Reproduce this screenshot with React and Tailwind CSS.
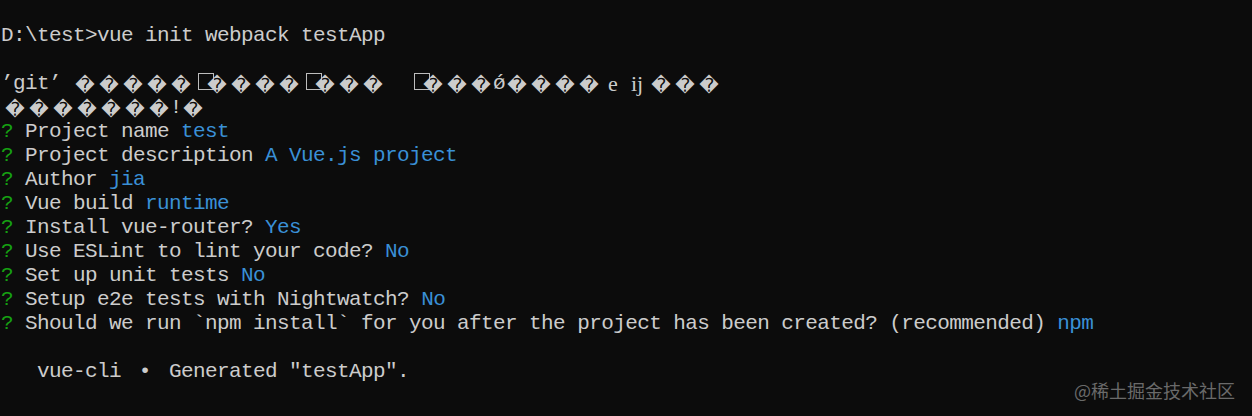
import React from 'react'

const FFFD = '\uFFFD'

// one replacement-char diamond, occupies a double-width cell like in the console
function Bad({ n = 1 }) {
  return Array.from({ length: n }).map((_, i) => (
    <span
      key={i}
      className="inline-flex w-[24px] h-[24px] shrink-0 items-center justify-center pt-[3px] font-['DejaVu_Sans',sans-serif] text-[19px] leading-none tracking-normal text-[#cccccc]"
    >
      {FFFD}
    </span>
  ))
}

// the empty "tofu" box glyph
function Tofu() {
  return (
    <span className="inline-flex w-[12px] h-[24px] shrink-0 pl-[5px] pt-[1px] overflow-visible">
      <span className="block w-[16px] h-[17px] shrink-0 border-[1.5px] border-[#bdbdbd]" />
    </span>
  )
}

function Cell({ w, children, className = '' }) {
  return (
    <span className={`inline-flex h-[24px] shrink-0 justify-center overflow-visible ${w} ${className}`}>{children}</span>
  )
}

function Line({ children }) {
  return <div className="flex h-[24px] leading-[24px] whitespace-pre">{children}</div>
}

function Q({ q, a }) {
  return (
    <Line>
      <span className="text-[#16a012]">?</span>
      <span> {q} </span>
      <span className="text-[#3a90d6]">{a}</span>
    </Line>
  )
}

const answers = [
  ['Project name', 'test'],
  ['Project description', 'A Vue.js project'],
  ['Author', 'jia'],
  ['Vue build', 'runtime'],
  ['Install vue-router?', 'Yes'],
  ['Use ESLint to lint your code?', 'No'],
  ['Set up unit tests', 'No'],
  ['Setup e2e tests with Nightwatch?', 'No'],
  ['Should we run `npm install` for you after the project has been created? (recommended)', 'npm'],
]

export default function App() {
  return (
    <div className="relative w-[1252px] h-[416px] overflow-hidden bg-[#0c0c0c] pt-[24px] pl-[1px] text-[#cccccc] font-['Liberation_Mono',monospace] text-[21px] tracking-[-0.6px]">
      <Line>{'D:\\test>vue init webpack testApp'}</Line>
      <Line>{' '}</Line>

      <Line>
        <span className="w-[72px] shrink-0">{'’git’ '}</span>
        <Bad n={5} />
        <Tofu />
        <Bad n={4} />
        <Tofu />
        <Bad n={3} />
        <span className="w-[24px] shrink-0" />
        <Tofu />
        <Bad n={3} />
        <Cell w="w-[12px]">ǿ</Cell>
        <Bad n={4} />
        <Cell w="w-[24px]" className="font-['Liberation_Serif',serif] text-[22px] tracking-normal">e</Cell>
        <Cell w="w-[24px]" className="font-['Liberation_Serif',serif] text-[22px] tracking-normal">ij</Cell>
        <Bad n={3} />
      </Line>

      <Line>
        <span className="w-[2px] shrink-0" />
        <Bad n={7} />
        <Cell w="w-[10px]" className="tracking-normal">!</Cell>
        <Bad n={1} />
      </Line>

      {answers.map(([q, a]) => (
        <Q key={q} q={q} a={a} />
      ))}

      <Line>{' '}</Line>
      <Line>
        <span>{'   vue-cli '}</span>
        <Cell w="w-[24px]" className="tracking-normal">•</Cell>
        <span>{' Generated "testApp".'}</span>
      </Line>

      <div className="absolute right-[17px] top-[378px] leading-[24px] text-[18px] tracking-normal text-[#6a6a6a] font-['Noto_Sans_CJK_SC','Noto_Sans',sans-serif]">
        @稀土掘金技术社区
      </div>
    </div>
  )
}
